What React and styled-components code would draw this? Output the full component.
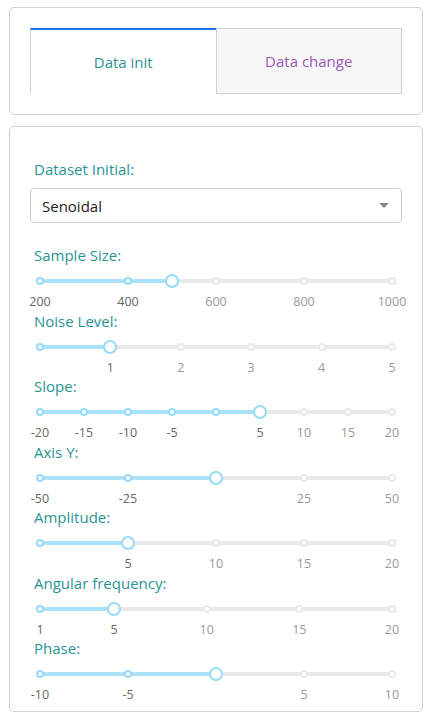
import React from "react";
import styled, { createGlobalStyle } from "styled-components";

const GlobalStyle = createGlobalStyle`
  html, body {
    margin: 0;
    padding: 0;
    background: #fff;
    font-family: "Open Sans", "Liberation Sans", sans-serif;
  }
`;

const sliders = [
  { label: "Sample Size:", min: 200, max: 1000, value: 500, marks: [200, 400, 600, 800, 1000] },
  { label: "Noise Level:", min: 0, max: 5, value: 1, marks: [0, 1, 2, 3, 4, 5], hidden: [0] },
  {
    label: "Slope:",
    min: -20,
    max: 20,
    value: 5,
    marks: [-20, -15, -10, -5, 0, 5, 10, 15, 20],
    hidden: [0],
  },
  { label: "Axis Y:", min: -50, max: 50, value: 0, marks: [-50, -25, 0, 25, 50], hidden: [0] },
  { label: "Amplitude:", min: 0, max: 20, value: 5, marks: [0, 5, 10, 15, 20], hidden: [0] },
  { label: "Angular frequency:", min: 1, max: 20, value: 5, marks: [1, 5, 10, 15, 20] },
  { label: "Phase:", min: -10, max: 10, value: 0, marks: [-10, -5, 0, 5, 10], hidden: [0] },
];

const Slider = ({ label, min, max, value, marks, hidden = [] }) => {
  const pct = (v) => ((v - min) / (max - min)) * 100;
  return (
    <SliderBlock>
      <FieldLabel>{label}</FieldLabel>
      <SliderArea>
        <Rail>
          <Track style={{ width: `${pct(value)}%` }} />
          {marks.map((m) =>
            m === value ? null : (
              <Dot key={m} active={m <= value} style={{ left: `${pct(m)}%` }} />
            )
          )}
          <Handle style={{ left: `${pct(value)}%` }} />
        </Rail>
        <Marks>
          {marks.map((m) =>
            hidden.includes(m) ? null : (
              <MarkText key={m} active={m <= value} style={{ left: `${pct(m)}%` }}>
                {m}
              </MarkText>
            )
          )}
        </Marks>
      </SliderArea>
    </SliderBlock>
  );
};

const App = () => {
  return (
    <Page>
      <GlobalStyle />
      <Card tabs>
        <Tabs>
          <Tab active>Data init</Tab>
          <Tab>Data change</Tab>
        </Tabs>
      </Card>
      <Card>
        <FieldLabel>Dataset Initial:</FieldLabel>
        <Select>
          <span>Senoidal</span>
          <Caret />
        </Select>
        <Sliders>
          {sliders.map((s) => (
            <Slider key={s.label} {...s} />
          ))}
        </Sliders>
      </Card>
    </Page>
  );
};

const Page = styled.div`
  padding: 7px 11px 0 9px;
  display: flex;
  flex-direction: column;
  gap: 11px;
`;

const Card = styled.div`
  border: 1px solid #d0d0d0;
  border-radius: 5px;
  padding: ${(p) => (p.tabs ? "20px 20px 20px 20px" : "32px 20px 7px 20px")};
`;

const Tabs = styled.div`
  display: flex;
  height: 66px;
`;

const Tab = styled.div`
  flex: 1;
  display: flex;
  align-items: center;
  justify-content: center;
  font-size: 15px;
  box-sizing: border-box;
  color: ${(p) => (p.active ? "#2b9393" : "#9b59b6")};
  background: ${(p) => (p.active ? "#fff" : "#f7f7f7")};
  border: 1px solid #d0d0d0;
  border-top: ${(p) => (p.active ? "2px solid #1a73e8" : "1px solid #d0d0d0")};
  border-bottom: ${(p) => (p.active ? "none" : "1px solid #d0d0d0")};
  border-right: ${(p) => (p.active ? "none" : "1px solid #d0d0d0")};
  padding-bottom: ${(p) => (p.active ? "1px" : "0")};
`;

const FieldLabel = styled.div`
  font-size: 15px;
  line-height: 20px;
  color: #2b9393;
  padding-left: 4px;
`;

const Select = styled.div`
  margin-top: 9px;
  height: 35px;
  box-sizing: border-box;
  border: 1px solid #ccc;
  border-radius: 4px;
  display: flex;
  align-items: center;
  justify-content: space-between;
  padding: 0 12px 0 11px;
  font-size: 15px;
  color: #222;
`;

const Caret = styled.span`
  width: 0;
  height: 0;
  border-left: 5px solid transparent;
  border-right: 5px solid transparent;
  border-top: 5px solid #888;
`;

const Sliders = styled.div`
  margin-top: 22px;
  display: flex;
  flex-direction: column;
`;

const SliderBlock = styled.div`
  height: 65.5px;
`;

const SliderArea = styled.div`
  margin: 0 10px;
  padding-top: 14px;
`;

const Rail = styled.div`
  position: relative;
  height: 4px;
  border-radius: 2px;
  background: #e9e9e9;
`;

const Track = styled.div`
  height: 4px;
  border-radius: 2px;
  background: #abe2fb;
`;

const Dot = styled.span`
  position: absolute;
  top: -2px;
  width: 8px;
  height: 8px;
  box-sizing: border-box;
  margin-left: -4px;
  border-radius: 50%;
  background: #fff;
  border: 2px solid ${(p) => (p.active ? "#96dbfa" : "#e9e9e9")};
`;

const Handle = styled.span`
  position: absolute;
  top: -5px;
  width: 14px;
  height: 14px;
  box-sizing: border-box;
  margin-left: -7px;
  border-radius: 50%;
  background: #fff;
  border: 2px solid #96dbfa;
`;

const Marks = styled.div`
  position: relative;
  height: 18px;
  margin-top: 10px;
`;

const MarkText = styled.span`
  position: absolute;
  top: 0;
  transform: translateX(-50%);
  font-size: 12.5px;
  line-height: 18px;
  color: ${(p) => (p.active ? "#666" : "#999")};
`;

export default App;
